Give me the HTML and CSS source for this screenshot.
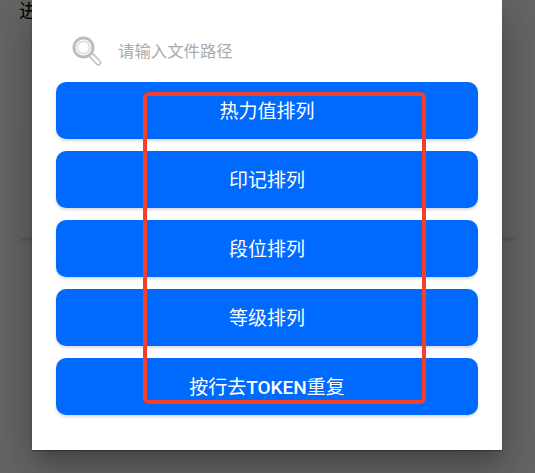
FILE: index.html
```html
<!DOCTYPE html>
<html lang="zh">
<head>
    <meta charset="UTF-8">
    <meta name="viewport" content="width=device-width, initial-scale=1.0">
    <title>文件排序</title>
    <link rel="stylesheet" href="styles.css">
</head>
<body>
    <main class="page">
        <p class="page-title">进</p>
        <div class="page-card"></div>
    </main>

    <div class="mask">
        <div class="dialog">
            <div class="search">
                <svg class="search-icon" viewBox="0 0 30 30" aria-hidden="true">
                    <circle cx="11.5" cy="11.5" r="9.5" fill="none" stroke="#bdbdbd" stroke-width="3"/>
                    <circle cx="11.5" cy="11.5" r="6.2" fill="none" stroke="#dcdcdc" stroke-width="1.5"/>
                    <path d="M18.8 18.8l2-1.2 7.4 7.6a2.3 2.3 0 0 1-3.2 3.2l-7.3-7.6z" fill="#fff" stroke="#c2c2c2" stroke-width="1.6" stroke-linejoin="round"/>
                </svg>
                <span class="search-text">请输入文件路径</span>
            </div>
            <div class="btn-list">
                <button class="btn">热力值排列</button>
                <button class="btn">印记排列</button>
                <button class="btn">段位排列</button>
                <button class="btn">等级排列</button>
                <button class="btn">按行去<b class="btn-latin">TOKEN</b>重复</button>
            </div>
        </div>
    </div>

    <div class="mark"></div>
</body>
</html>
```

FILE: styles.css
```css
* {
    margin: 0;
    padding: 0;
    box-sizing: border-box;
}

html, body {
    height: 100%;
    overflow: hidden;
}

body {
    font-family: "Roboto", "Noto Sans CJK SC", sans-serif;
    background: #fff;
}

.page {
    height: 100%;
    padding: 0 19px;
}

.page-title {
    font-size: 19px;
    line-height: 24px;
    color: #000;
}

.page-card {
    height: 110px;
    margin-top: 104px;
    background: #fdfdfd;
    box-shadow: 0 3px 4px -1px rgba(0, 0, 0, 0.18);
}

.mask {
    position: absolute;
    top: 0;
    left: 0;
    width: 100%;
    height: 100%;
    background: rgba(0, 0, 0, 0.6);
}

.dialog {
    width: 470px;
    height: 450px;
    margin-left: 32px;
    padding: 0 24px;
    background: #fff;
    box-shadow: 0 1px 1px rgba(0, 0, 0, 0.3), 0 11px 15px -7px rgba(0, 0, 0, 0.2), 0 24px 38px 3px rgba(0, 0, 0, 0.14), 0 9px 46px 8px rgba(0, 0, 0, 0.12);
}

.search {
    display: flex;
    align-items: center;
    height: 82px;
    padding: 19px 0 0 16px;
}

.search-icon {
    width: 30px;
    height: 30px;
    margin-right: 17px;
}

.search-text {
    margin: -2px 0 0 -1px;
    font-size: 16.4px;
    color: #aaa;
}

.btn-list {
    display: flex;
    flex-direction: column;
    gap: 12px;
}

.btn {
    height: 57px;
    padding-bottom: 3px;
    border: none;
    border-radius: 10px;
    background: #006aff;
    color: #fff;
    font-family: inherit;
    font-size: 19px;
    box-shadow: 0 2px 3px rgba(0, 0, 0, 0.15);
}

.btn-latin {
    font-weight: 500;
}

/* 红色标注框 */
.mark {
    position: absolute;
    top: 92px;
    left: 143px;
    width: 283px;
    height: 312px;
    border: 4px solid #f44028;
    border-radius: 6px;
}
```
